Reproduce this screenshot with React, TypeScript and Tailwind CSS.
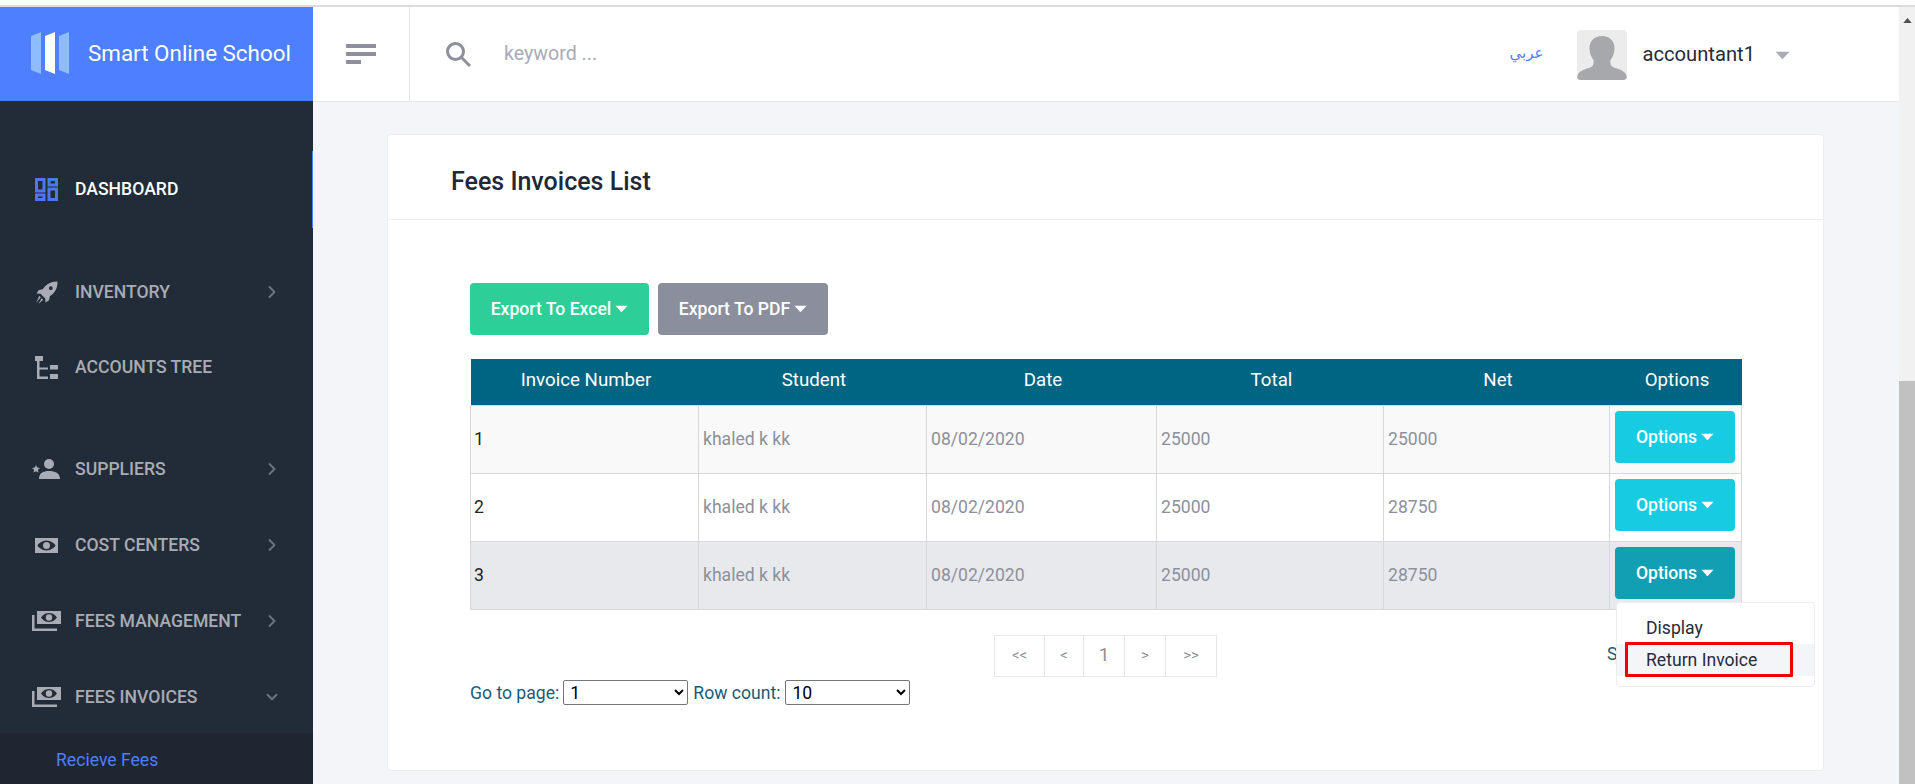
import React from "react";
import { ChevronDown, ChevronRight } from "lucide-react";

const font = "font-['Roboto','Liberation_Sans',sans-serif]";

const Caret = ({ className }: { className: string }) => (
  <svg viewBox="0 0 14 8" className={className} fill="currentColor">
    <path d="M0.5 0.5h13L7 7.5z" />
  </svg>
);

const LogoIcon = () => (
  <svg viewBox="0 0 38 42" className="w-[38px] h-[42px]">
    <path d="M0 4 10 0v42L0 38z" fill="#8ebcff" />
    <path d="M14 4 24 0v42l-10-4z" fill="#ffffff" />
    <path d="M28 4 38 0v42l-10-4z" fill="#8ebcff" />
  </svg>
);

const DashIcon = () => (
  <svg viewBox="0 0 23 23" className="w-[23px] h-[23px]" fill="none" stroke="#4a7ae8" strokeWidth="3">
    <rect x="1.5" y="1.5" width="7.500" height="11.500" />
    <rect x="14" y="1.5" width="7.500" height="5.500" />
    <rect x="1.5" y="17" width="7.500" height="4.500" />
    <rect x="14" y="11" width="7.500" height="10.500" />
  </svg>
);

const RocketIcon = () => (
  <svg viewBox="0 0 24 24" className="w-[23px] h-[23px]" fill="#a9acb4">
    <path d="M23.500.5c-5-.2-9.500 1.300-13 5L8 8.500l-4 .8L1.500 13l4.300.3 4.900 4.900.3 4.300 3.700-2.500.8-4 3-2.500c3.700-3.500 5.200-8 5-13.500zM16.500 9.500a2 2 0 1 1 0-4 2 2 0 0 1 0 4z" />
    <path d="M4.500 15.500 6 17l-5 6zM7 18l1.500 1.500L3.500 24z" />
  </svg>
);

const TreeIcon = () => (
  <svg viewBox="0 0 23 23" className="w-[23px] h-[23px]" fill="#a9acb4">
    <rect x="0" y="0" width="8" height="5" />
    <rect x="2" y="5" width="2.500" height="18" />
    <rect x="2" y="11.500" width="11" height="2" />
    <rect x="2" y="20.500" width="11" height="2.500" />
    <rect x="15" y="9" width="8" height="4.500" />
    <rect x="15" y="18" width="8" height="5" />
  </svg>
);

const SupplierIcon = () => (
  <svg viewBox="0 0 28 20" className="w-[28px] h-[20px]" fill="#a9acb4">
    <circle cx="17" cy="5" r="5" />
    <path d="M7 20c0-6 4-8 10-8s11 2 11 8z" />
    <path d="M4 6l1.200 2.600 2.800.3-2.100 1.900.6 2.800L4 12.200l-2.500 1.400.6-2.800L0 8.900l2.800-.3z" />
  </svg>
);

const BillIcon = () => (
  <svg viewBox="0 0 23 15" className="w-[23px] h-[15px]">
    <path fillRule="evenodd" fill="#a9acb4" d="M0 0h23v15H0zM11.500 2.500C7 2.500 3 6 2.500 7.500 3 9 7 12.500 11.500 12.500s8.500-3.500 9-5c-.5-1.500-4.500-5-9-5z" />
    <circle cx="11.500" cy="7.500" r="3.500" fill="#a9acb4" />
  </svg>
);

const BillsIcon = () => (
  <svg viewBox="0 0 29 20" className="w-[29px] h-[20px]">
    <path fillRule="evenodd" fill="#a9acb4" d="M5 0h24v13H5zM17 2c-4.500 0-7 3-8 4.500C10 8 12.500 11 17 11s7-3 8-4.500C24 5 21.500 2 17 2z" />
    <circle cx="17" cy="6.500" r="3.200" fill="#a9acb4" />
    <path fill="#a9acb4" d="M0 4h2.500v13.500H25V20H0z" />
  </svg>
);

const SearchIcon = () => (
  <svg viewBox="0 0 26 26" className="w-[26px] h-[26px]" fill="none" stroke="#8d909c" strokeWidth="3">
    <circle cx="10.500" cy="10.500" r="8" />
    <path d="M16.500 16.500 25 25" />
  </svg>
);

const Avatar = () => (
  <div className="w-[50px] h-[50px] mt-[1px] bg-[#ececec] rounded overflow-hidden">
    <svg viewBox="0 0 50 50" className="w-full h-full" fill="#a6a8ab">
      <path d="M25 6c-8 0-12.500 5-12.500 12 0 5 1.500 9 4 12 .5 3 0 5-1.500 6.500-3 2-12 3-14 8-1 2-1 4-1 5.500h50c0-1.500 0-3.500-1-5.500-2-5-11-6-14-8-1.500-1.500-2-3.500-1.500-6.500 2.500-3 4-7 4-12 0-7-4.500-12-12.500-12z" />
    </svg>
  </div>
);

const navItems = [
  { label: "INVENTORY", icon: <RocketIcon />, arrow: true, h: "h-[76px]" },
  { label: "ACCOUNTS TREE", icon: <TreeIcon />, arrow: false, h: "h-[75px] mb-[26px]" },
  { label: "SUPPLIERS", icon: <SupplierIcon />, arrow: true, h: "h-[76px]" },
  { label: "COST CENTERS", icon: <BillIcon />, arrow: true, h: "h-[76px]" },
  { label: "FEES MANAGEMENT", icon: <BillsIcon />, arrow: true, h: "h-[76px]" },
];

const Sidebar = () => (
  <aside className="w-[313px] shrink-0 flex flex-col bg-[#222b38]">
    <div className="h-[94px] flex items-center bg-[#4e7fff] pl-[31px] pb-[2px]">
      <LogoIcon />
      <span className="ml-[19px] text-white text-[22.4px] leading-none">Smart Online School</span>
    </div>
    <nav className="flex-1 flex flex-col overflow-hidden">
      <div className="mt-[50px] h-[77px] mb-[26px] flex items-center relative">
        <span className="w-[75px] flex justify-center pl-[17px] shrink-0"><DashIcon /></span>
        <span className="text-white font-medium text-[17.6px]">DASHBOARD</span>
        <span className="absolute right-0 top-0 bottom-0 w-[1px] bg-[#4e7fff]" />
      </div>
      {navItems.map((item) => (
        <div key={item.label} className={`${item.h} shrink-0 flex items-center`}>
          <span className="w-[75px] flex justify-center pl-[17px] shrink-0">{item.icon}</span>
          <span className="flex-1 text-[#a9acb4] font-medium text-[17.6px] whitespace-nowrap">{item.label}</span>
          {item.arrow && <ChevronRight className="w-[20px] h-[20px] mr-[31px] text-[#6f7580]" strokeWidth={2.2} />}
        </div>
      ))}
      <div className="h-[74px] pt-[2px] shrink-0 flex items-center">
        <span className="w-[75px] flex justify-center pl-[17px] shrink-0"><BillsIcon /></span>
        <span className="flex-1 text-[#a9acb4] font-medium text-[17.6px]">FEES INVOICES</span>
        <ChevronDown className="w-[18px] h-[18px] mr-[32px] text-[#6f7580]" strokeWidth={2.5} />
      </div>
      <div className="flex-1 bg-[#1e2632] pl-[56px] pt-[14px]">
        <span className="text-[#4e7fff] text-[17.6px]">Recieve Fees</span>
      </div>
    </nav>
  </aside>
);

const Header = () => (
  <header className="h-[95px] shrink-0 flex items-center bg-white border-b border-[#e6e8ee]">
    <div className="w-[97px] h-full flex items-center justify-center border-r border-[#e6e8ee]">
      <div className="flex flex-col items-start gap-[4px] w-[30px]">
        <span className="h-[4px] w-full bg-[#8d909c]" />
        <span className="h-[4px] w-full bg-[#8d909c]" />
        <span className="h-[4px] w-[15px] bg-[#8d909c]" />
      </div>
    </div>
    <div className="ml-[35px]"><SearchIcon /></div>
    <span className="ml-[33px] text-[#a9abb5] text-[19.6px] flex-1">keyword ...</span>
    <span dir="rtl" className="text-[#4e7fff] text-[15px] mr-[34px] pb-[3px] font-['Noto_Sans','DejaVu_Sans',sans-serif]">عربي</span>
    <Avatar />
    <span className="ml-[15px] text-[#282a3c] text-[20.2px]">accountant1</span>
    <Caret className="ml-[20px] mt-[3px] w-[15px] h-[9px] text-[#a9abb5]" />
    <span className="w-[109px]" />
  </header>
);

const rows = [
  { id: 1, net: "25000", bg: "bg-[#f9f9f9]", btn: "bg-[#17cbe3]" },
  { id: 2, net: "28750", bg: "bg-white", btn: "bg-[#17cbe3]" },
  { id: 3, net: "28750", bg: "bg-[#e8e9ed]", btn: "bg-[#129fb3]" },
];

const InvoiceTable = () => (
  <table className="w-[1271px] table-fixed border-collapse text-[17.6px]">
    <colgroup>
      <col className="w-[228px]" />
      <col className="w-[228px]" />
      <col className="w-[230px]" />
      <col className="w-[227px]" />
      <col className="w-[226px]" />
      <col className="w-[132px]" />
    </colgroup>
    <thead>
      <tr className="h-[46px] bg-[#006582] text-white">
        {["Invoice Number", "Student", "Date", "Total", "Net", "Options"].map((h) => (
          <th key={h} className="font-normal text-[18.72px] text-center pb-[4px] pl-[3px]">{h}</th>
        ))}
      </tr>
    </thead>
    <tbody>
      {rows.map((r) => (
        <tr key={r.id} className={`h-[68px] ${r.bg} text-[#8d909c]`}>
          <td className="border border-[#d8d8d8] pl-[3px] text-[#212529]">{r.id}</td>
          <td className="border border-[#d8d8d8] pl-[4px]">khaled k kk</td>
          <td className="border border-[#d8d8d8] pl-[4px]">08/02/2020</td>
          <td className="border border-[#d8d8d8] pl-[4px]">25000</td>
          <td className="border border-[#d8d8d8] pl-[4px]">{r.net}</td>
          <td className="border border-[#d8d8d8] pl-[5px] pb-[4px]">
            <button className={`w-[120px] h-[52px] rounded-[4px] ${r.btn} text-white font-medium text-[17.6px] flex items-center justify-center gap-[4px]`}>
              Options <Caret className="w-[13px] h-[8px]" />
            </button>
          </td>
        </tr>
      ))}
    </tbody>
  </table>
);

const pages = [
  { label: "<<", w: "w-[50px]" },
  { label: "<", w: "w-[39px]" },
  { label: "1", w: "w-[41px]" },
  { label: ">", w: "w-[41px]" },
  { label: ">>", w: "w-[50px]" },
];

const Pagination = () => (
  <div className="flex h-[42px] border border-[#e8e8ec] text-[#8d909c] divide-x divide-[#e8e8ec]">
    {pages.map((p) => (
      <span key={p.label} className={`${p.w} flex items-center justify-center ${p.label === "1" ? "text-[19px]" : "text-[15px]"}`}>{p.label}</span>
    ))}
  </div>
);

const PageSelect = ({ value, options }: { value: string; options: string[] }) => (
  <select defaultValue={value} className="w-[125px] h-[25px] bg-white text-black border border-[#767676] rounded-[2px] text-[17.6px] pl-[2px] appearance-auto">
    {options.map((o) => <option key={o}>{o}</option>)}
  </select>
);

const OptionsMenu = () => (
  <div className="absolute left-[1228px] top-[467px] w-[199px] h-[85px] bg-white border border-[#ebedf2] rounded-[4px] pt-[9px] text-[#282a3c] text-[17.6px]">
    <div className="h-[32px] pl-[29px] flex items-center">Display</div>
    <div className="relative h-[32px] pl-[29px] flex items-center bg-[#f4f5f8]">
      Return Invoice
      <span className="absolute left-[8px] top-[-2px] w-[168px] h-[35px] border-[3px] border-[#f00000] rounded-[1px]" />
    </div>
  </div>
);

const Card = () => (
  <section className="relative mt-[32px] ml-[74px] w-[1437px] h-[637px] bg-white border border-[#ebedf2] rounded-[4px]">
    <div className="h-[85px] flex items-center pl-[63px] pt-[10px] border-b border-[#ebedf2]">
      <h3 className="text-[#212837] text-[25px] font-medium">Fees Invoices List</h3>
    </div>
    <div className="pl-[82px] pt-[63px]">
      <div className="flex gap-[9px] mb-[24px]">
        <button className="w-[179px] h-[52px] rounded-[4px] bg-[#2ccf97] text-white font-medium text-[17.6px] flex items-center justify-center gap-[4px]">
          Export To Excel <Caret className="w-[13px] h-[8px]" />
        </button>
        <button className="w-[170px] h-[52px] rounded-[4px] bg-[#8b8f9d] text-white font-medium text-[17.6px] flex items-center justify-center gap-[4px]">
          Export To PDF <Caret className="w-[13px] h-[8px]" />
        </button>
      </div>
      <InvoiceTable />
      <div className="relative h-[100px] text-[17.6px] text-[#1d5b73]">
        <div className="absolute left-[524px] top-[25px]"><Pagination /></div>
        <div className="absolute left-[1137px] top-[31px]">Showing</div>
        <div className="absolute left-0 top-[70px] flex items-center gap-[4px]">
          <span>Go to page:</span>
          <PageSelect value="1" options={["1"]} />
          <span className="ml-[1px]">Row count:</span>
          <span className="ml-[1px] flex"><PageSelect value="10" options={["10", "20", "50"]} /></span>
        </div>
      </div>
    </div>
    <OptionsMenu />
  </section>
);

const Scrollbar = () => (
  <div className="w-[16px] shrink-0 flex flex-col bg-[#f1f1f1]">
    <div className="h-[374px] flex justify-center pt-[11px]">
      <svg viewBox="0 0 10 6" className="w-[9px] h-[5px]" fill="#505050"><path d="M5 0l5 6H0z" /></svg>
    </div>
    <div className="flex-1 bg-[#c1c1c1]" />
  </div>
);

export default function App() {
  return (
    <div className={`${font} h-screen w-full overflow-hidden flex flex-col bg-white`}>
      <div className="h-[5px] shrink-0 bg-white" />
      <div className="h-[2px] shrink-0 bg-[#dcdcdc]" />
      <div className="flex-1 flex min-h-0">
        <Sidebar />
        <div className="flex-1 flex flex-col min-w-0 bg-[#f3f5f9]">
          <Header />
          <main className="flex-1 overflow-hidden">
            <Card />
          </main>
        </div>
        <Scrollbar />
      </div>
    </div>
  );
}
